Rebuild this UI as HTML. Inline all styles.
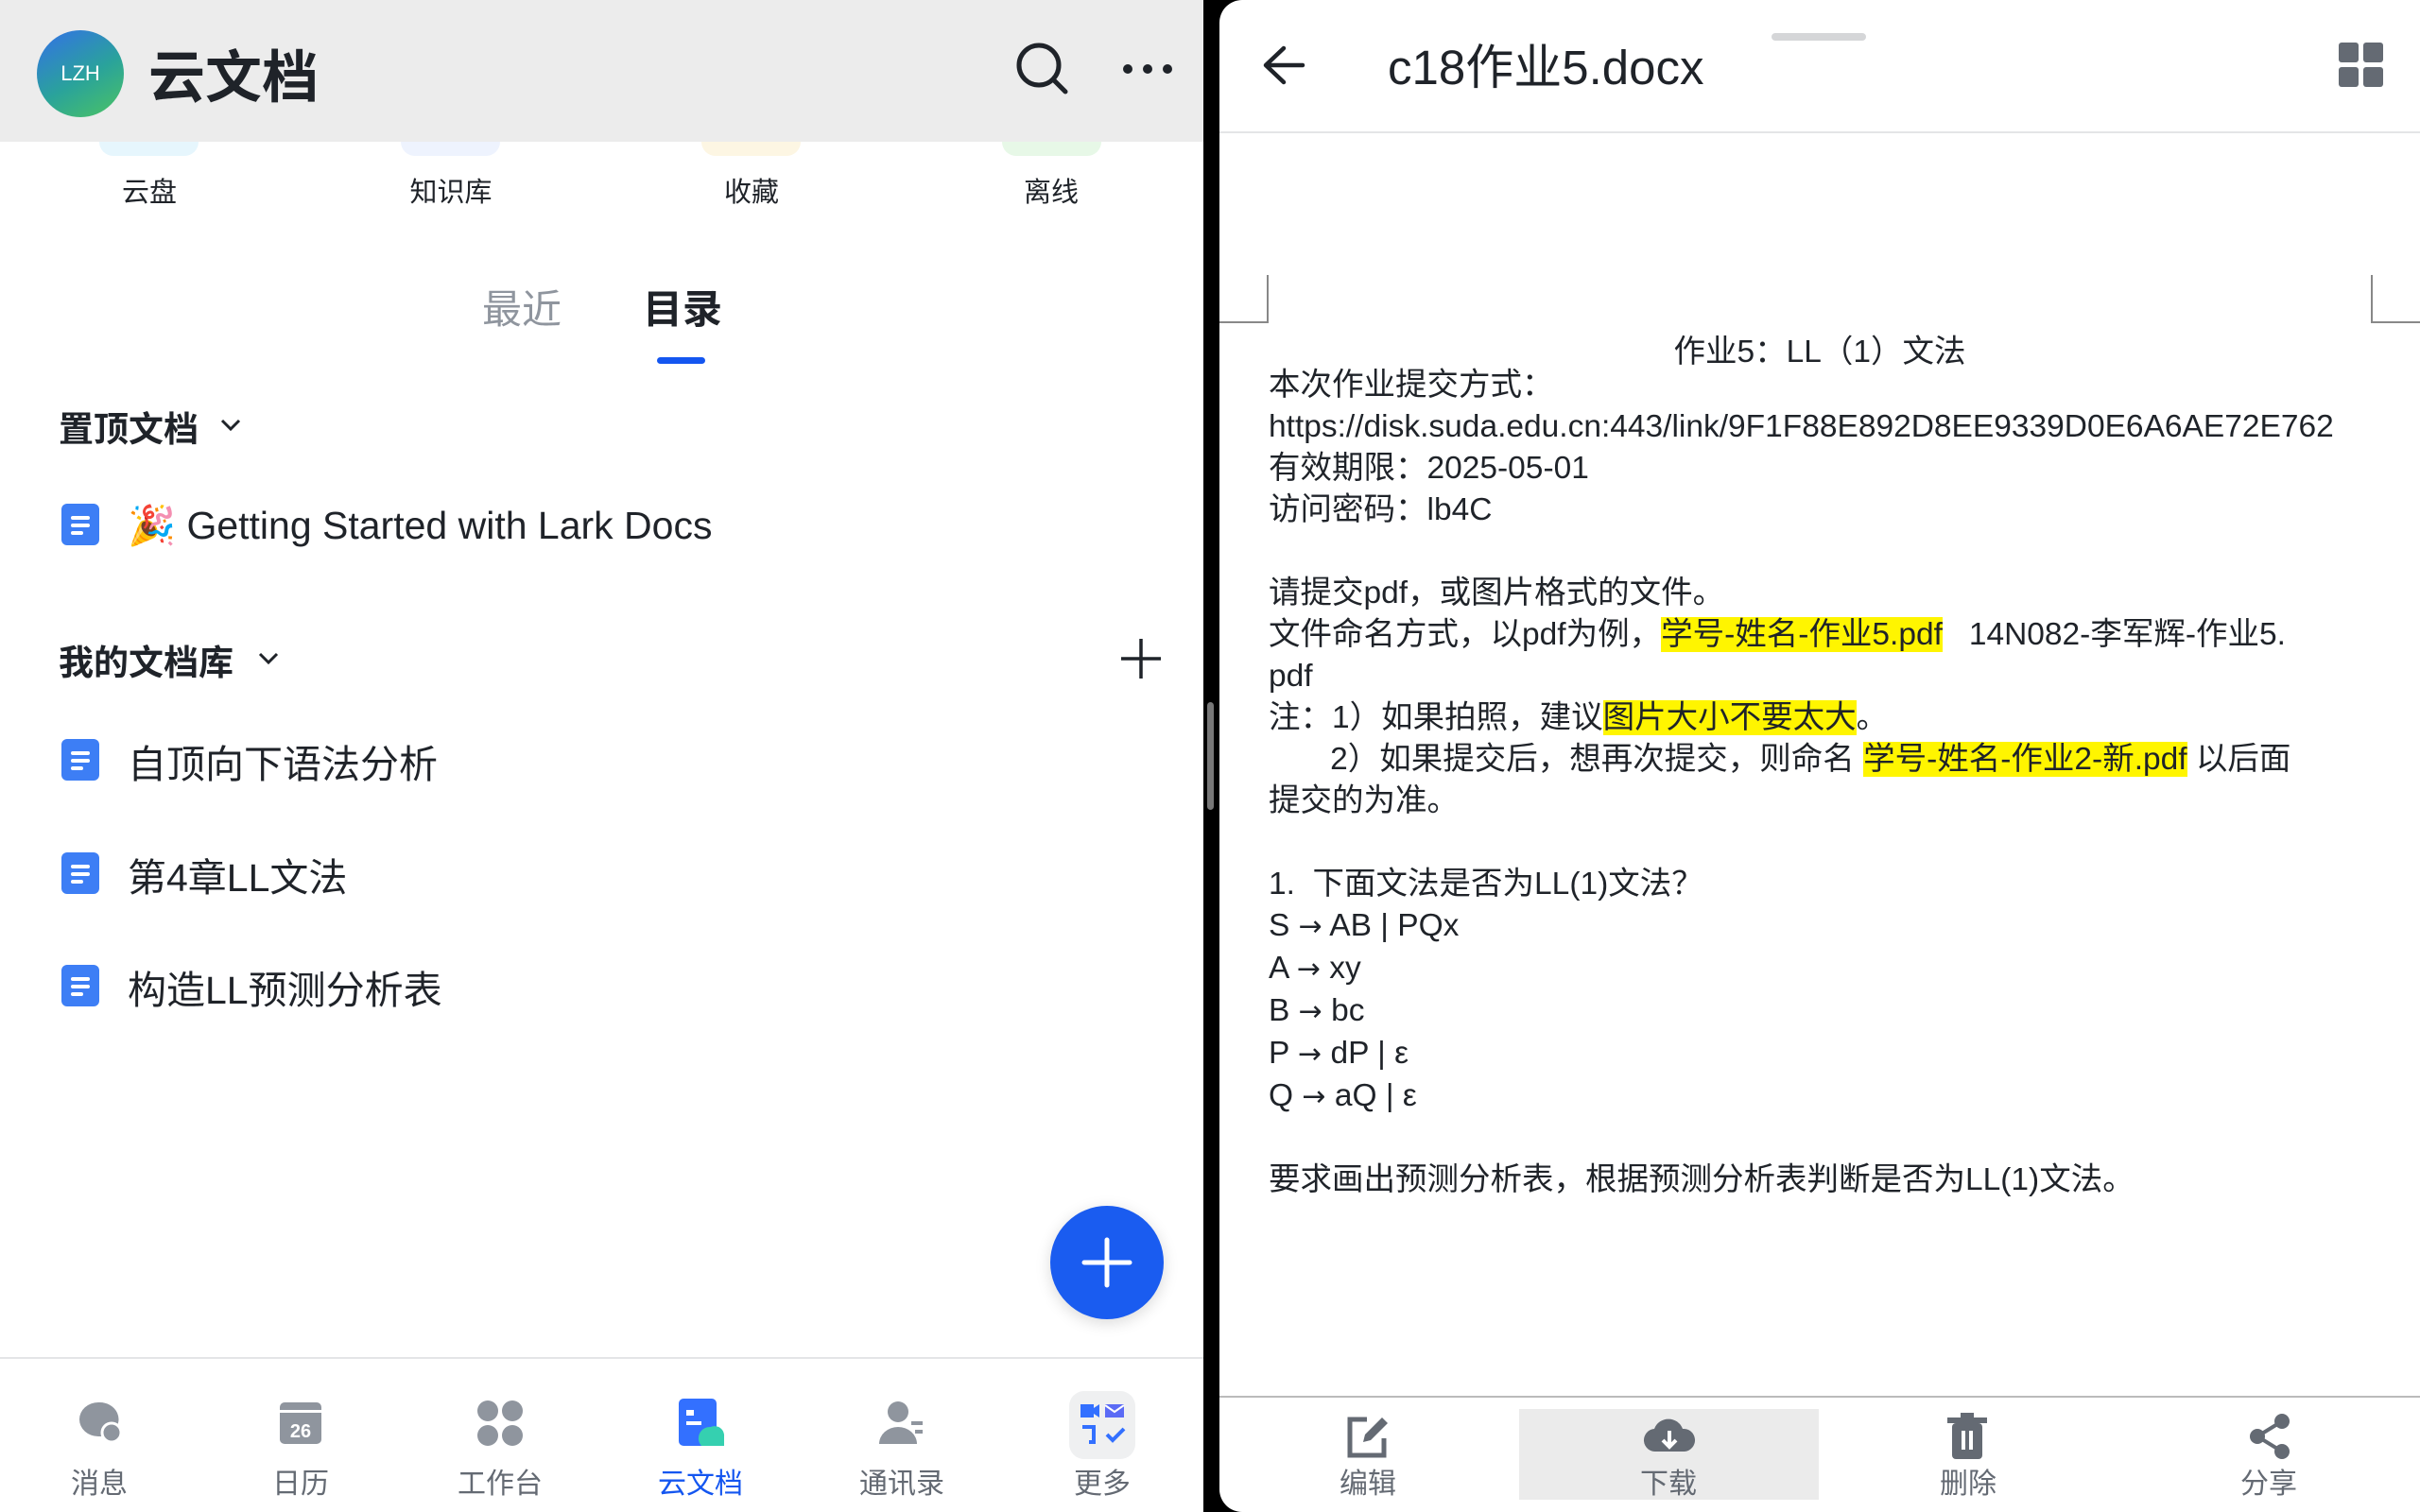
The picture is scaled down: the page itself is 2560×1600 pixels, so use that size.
<!DOCTYPE html>
<html><head><meta charset="utf-8"><style>
*{margin:0;padding:0;box-sizing:border-box}
body{width:2560px;height:1600px;background:#000;position:relative;overflow:hidden;font-family:"Liberation Sans","Noto Sans CJK SC",sans-serif;color:#1f2329}
.a{position:absolute;white-space:nowrap}
#L{position:absolute;left:0;top:0;width:1273px;height:1600px;background:#fff;overflow:hidden}
#R{position:absolute;left:1290px;top:0;width:1270px;height:1600px;background:#fff;border-radius:24px 0 0 24px;overflow:hidden}
.doc{position:absolute;left:65px;width:40px;height:44px;background:#3d7ef5;border-radius:6px}
.doc i{position:absolute;left:10px;height:4px;background:#fff;border-radius:2px}
.it{font-size:41px;color:#1f2329}
.nav{font-size:30px;color:#646a73;transform:translateX(-50%)}
.hl{background:#fff500}
.ar{font-family:"DejaVu Sans",sans-serif;font-size:30px}
#txt{position:absolute;left:52px;top:386px;font-size:33.5px;line-height:44px;color:#1f2329;white-space:pre}
</style></head><body>
<div id="L">
 <div class="a" style="left:0;top:0;width:1273px;height:150px;background:#ececec"></div>
 <div class="a" style="left:39px;top:32px;width:92px;height:92px;border-radius:50%;background:linear-gradient(150deg,#3370e8,#2aa39a 55%,#4cc462);color:#fff;font-size:22px;text-align:center;line-height:92px">LZH</div>
 <div class="a" style="left:157px;top:48px;font-size:60px;font-weight:bold;line-height:70px">云文档</div>
 <svg class="a" style="left:1072px;top:42px" width="62" height="62" viewBox="0 0 62 62"><circle cx="27" cy="27" r="21" fill="none" stroke="#1f2329" stroke-width="5"/><path d="M42 42l13 13" stroke="#1f2329" stroke-width="5" stroke-linecap="round"/></svg>
 <svg class="a" style="left:1186px;top:66px" width="56" height="14"><circle cx="7" cy="7" r="5" fill="#1f2329"/><circle cx="28" cy="7" r="5" fill="#1f2329"/><circle cx="49" cy="7" r="5" fill="#1f2329"/></svg>
 <div class="a" style="left:105px;top:150px;width:105px;height:15px;background:#e6f6fd;border-radius:0 0 40px 40px"></div>
 <div class="a" style="left:424px;top:150px;width:105px;height:15px;background:#eef3fe;border-radius:0 0 40px 40px"></div>
 <div class="a" style="left:742px;top:150px;width:105px;height:15px;background:#fdf6e3;border-radius:0 0 40px 40px"></div>
 <div class="a" style="left:1060px;top:150px;width:105px;height:15px;background:#e7f8e7;border-radius:0 0 40px 40px"></div>
 <div class="a" style="left:158px;top:180px;font-size:29px;transform:translateX(-50%)">云盘</div>
 <div class="a" style="left:477px;top:180px;font-size:29px;transform:translateX(-50%)">知识库</div>
 <div class="a" style="left:795px;top:180px;font-size:29px;transform:translateX(-50%)">收藏</div>
 <div class="a" style="left:1112px;top:180px;font-size:29px;transform:translateX(-50%)">离线</div>
 <div class="a" style="left:510px;top:294px;font-size:42px;color:#8f959e">最近</div>
 <div class="a" style="left:680px;top:294px;font-size:42px;font-weight:bold">目录</div>
 <div class="a" style="left:695px;top:378px;width:51px;height:7px;background:#1456f0;border-radius:4px"></div>
 <div class="a" style="left:62px;top:424px;font-size:37px;font-weight:bold">置顶文档</div>
 <svg class="a" style="left:232px;top:442px" width="24" height="16"><path d="M3 3l9 9 9-9" fill="none" stroke="#1f2329" stroke-width="3"/></svg>
 <div class="doc" style="top:533px"><i style="top:13px;width:20px"></i><i style="top:21px;width:20px"></i><i style="top:29px;width:13px"></i></div>
 <div class="a it" style="left:135px;top:533px">🎉 Getting Started with Lark Docs</div>
 <div class="a" style="left:62px;top:671px;font-size:37px;font-weight:bold">我的文档库</div>
 <svg class="a" style="left:272px;top:689px" width="24" height="16"><path d="M3 3l9 9 9-9" fill="none" stroke="#1f2329" stroke-width="3"/></svg>
 <svg class="a" style="left:1184px;top:674px" width="46" height="46"><path d="M23 2v42M2 23h42" stroke="#1f2329" stroke-width="3.5"/></svg>
 <div class="doc" style="top:782px"><i style="top:13px;width:20px"></i><i style="top:21px;width:20px"></i><i style="top:29px;width:13px"></i></div>
 <div class="a it" style="left:135px;top:775px">自顶向下语法分析</div>
 <div class="doc" style="top:902px"><i style="top:13px;width:20px"></i><i style="top:21px;width:20px"></i><i style="top:29px;width:13px"></i></div>
 <div class="a it" style="left:135px;top:895px">第4章LL文法</div>
 <div class="doc" style="top:1021px"><i style="top:13px;width:20px"></i><i style="top:21px;width:20px"></i><i style="top:29px;width:13px"></i></div>
 <div class="a it" style="left:135px;top:1014px">构造LL预测分析表</div>
 <div class="a" style="left:1111px;top:1276px;width:120px;height:120px;border-radius:50%;background:#1a5cf0;box-shadow:0 4px 16px rgba(0,0,0,.15)"></div>
 <svg class="a" style="left:1143px;top:1308px" width="56" height="56"><path d="M28 4v48M4 28h48" stroke="#fff" stroke-width="5" stroke-linecap="round"/></svg>
 <div class="a" style="left:0;top:1436px;width:1273px;height:2px;background:#e4e5e7"></div>
 <svg class="a" style="left:78px;top:1480px" width="54" height="52"><path d="M26 4a20 18 0 1 0 0 36h8l6 6v-10a20 18 0 0 0-14-32z" fill="#8f959e"/><circle cx="40" cy="36" r="10" fill="#8f959e" stroke="#fff" stroke-width="3"/></svg>
 <svg class="a" style="left:294px;top:1480px" width="48" height="50"><rect x="2" y="4" width="44" height="44" rx="5" fill="#8f959e"/><rect x="2" y="12" width="44" height="3" fill="#fff"/><text x="24" y="41" font-size="20" font-weight="bold" fill="#fff" text-anchor="middle" font-family="Liberation Sans">26</text></svg>
 <svg class="a" style="left:503px;top:1480px" width="52" height="52"><circle cx="13" cy="13" r="11" fill="#8f959e"/><circle cx="39" cy="13" r="11" fill="#8f959e"/><circle cx="13" cy="39" r="11" fill="#8f959e"/><circle cx="39" cy="39" r="11" fill="#8f959e"/></svg>
 <svg class="a" style="left:716px;top:1480px" width="52" height="52"><rect x="2" y="0" width="40" height="50" rx="5" fill="#3370ff"/><rect x="10" y="12" width="8" height="6" fill="#fff"/><rect x="10" y="24" width="16" height="4" fill="#fff"/><path d="M26 50a12 12 0 0 1 10-20 10 10 0 0 1 14 10v10z" fill="#35d0b0"/></svg>
 <svg class="a" style="left:928px;top:1480px" width="52" height="52"><circle cx="22" cy="14" r="11" fill="#8f959e"/><path d="M2 48a20 18 0 0 1 40 0z" fill="#8f959e"/><rect x="36" y="24" width="12" height="4" fill="#8f959e"/><rect x="40" y="33" width="8" height="4" fill="#8f959e"/></svg>
 <div class="a" style="left:1131px;top:1472px;width:70px;height:72px;background:#eff0f1;border-radius:16px"></div>
 <svg class="a" style="left:1141px;top:1482px" width="52" height="52"><rect x="2" y="4" width="14" height="14" fill="#3370ff"/><path d="M16 8l6-4v14l-6-4z" fill="#3370ff"/><rect x="28" y="4" width="20" height="14" fill="#5b6bf5"/><path d="M28 5l10 7 10-7" stroke="#fff" stroke-width="2" fill="none"/><path d="M4 28h12v16h-5" stroke="#3370ff" stroke-width="4" fill="none"/><path d="M30 36l6 6 12-12" stroke="#3370ff" stroke-width="4" fill="none"/></svg>
 <div class="a nav" style="left:105px;top:1545px">消息</div>
 <div class="a nav" style="left:318px;top:1545px">日历</div>
 <div class="a nav" style="left:529px;top:1545px">工作台</div>
 <div class="a nav" style="left:741px;top:1545px;color:#1456f0">云文档</div>
 <div class="a nav" style="left:954px;top:1545px">通讯录</div>
 <div class="a nav" style="left:1166px;top:1545px">更多</div>
</div>
<div class="a" style="left:1277px;top:743px;width:7px;height:114px;background:#777;border-radius:4px"></div>
<div id="R">
 <div class="a" style="left:584px;top:35px;width:100px;height:8px;background:#d5d6d8;border-radius:4px"></div>
 <svg class="a" style="left:44px;top:46px" width="48" height="46"><path d="M44 23H6M24 5L5 23l19 18" fill="none" stroke="#1f2329" stroke-width="4.5" stroke-linecap="round" stroke-linejoin="round"/></svg>
 <div class="a" style="left:178px;top:42px;font-size:51px;line-height:60px">c18作业5.docx</div>
 <svg class="a" style="left:1184px;top:45px" width="48" height="48"><rect x="0" y="0" width="21" height="21" rx="3" fill="#646a73"/><rect x="26" y="0" width="21" height="21" rx="3" fill="#646a73"/><rect x="0" y="26" width="21" height="21" rx="3" fill="#646a73"/><rect x="26" y="26" width="21" height="21" rx="3" fill="#646a73"/></svg>
 <div class="a" style="left:0;top:139px;width:1270px;height:2px;background:#e4e5e7"></div>
 <div class="a" style="left:0;top:291px;width:52px;height:51px;border-right:2px solid #888;border-bottom:2px solid #888"></div>
 <div class="a" style="left:1218px;top:291px;width:52px;height:51px;border-left:2px solid #888;border-bottom:2px solid #888"></div>
 <div class="a" style="left:0;top:344px;width:1270px;text-align:center;font-size:33.5px;padding-left:0">作业5：LL（1）文法</div>
 <div id="txt">本次作业提交方式：
https://disk.suda.edu.cn:443/link/9F1F88E892D8EE9339D0E6A6AE72E762
有效期限：2025-05-01
访问密码：lb4C

请提交pdf，或图片格式的文件。
文件命名方式，以pdf为例，<span class="hl">学号-姓名-作业5.pdf</span>   14N082-李军辉-作业5.
pdf
注：1）如果拍照，建议<span class="hl">图片大小不要太大</span>。
       2）如果提交后，想再次提交，则命名 <span class="hl">学号-姓名-作业2-新.pdf</span> 以后面
提交的为准。

1.  下面文法是否为LL(1)文法？
S <span class="ar">→</span> AB | PQx
A <span class="ar">→</span> xy
B <span class="ar">→</span> bc
P <span class="ar">→</span> dP | ε
Q <span class="ar">→</span> aQ | ε

要求画出预测分析表，根据预测分析表判断是否为LL(1)文法。</div>
 <div class="a" style="left:0;top:1477px;width:1270px;height:2px;background:#bbb"></div>
 <div class="a" style="left:317px;top:1491px;width:317px;height:96px;background:#ebebeb"></div>
 <svg class="a" style="left:132px;top:1496px" width="50" height="50"><path d="M24 6H6v38h36V26" fill="none" stroke="#646a73" stroke-width="5"/><path d="M20 30l2-8 18-18 6 6-18 18z" fill="#646a73"/></svg>
 <svg class="a" style="left:448px;top:1496px" width="56" height="50"><path d="M14 40a12 12 0 0 1-2-24 16 16 0 0 1 30 0 12 12 0 0 1 2 24z" fill="#646a73"/><path d="M28 18v16M21 28l7 7 7-7" stroke="#fff" stroke-width="4" fill="none"/></svg>
 <svg class="a" style="left:766px;top:1494px" width="50" height="52"><rect x="4" y="6" width="42" height="6" fill="#646a73"/><rect x="18" y="1" width="14" height="6" fill="#646a73"/><rect x="9" y="12" width="32" height="38" rx="4" fill="#646a73"/><rect x="19" y="20" width="4" height="20" fill="#fff"/><rect x="27" y="20" width="4" height="20" fill="#fff"/></svg>
 <svg class="a" style="left:1086px;top:1494px" width="50" height="52"><circle cx="38" cy="10" r="8" fill="#646a73"/><circle cx="12" cy="26" r="8" fill="#646a73"/><circle cx="38" cy="42" r="8" fill="#646a73"/><path d="M38 10L12 26l26 16" stroke="#646a73" stroke-width="4" fill="none"/></svg>
 <div class="a nav" style="left:157px;top:1545px">编辑</div>
 <div class="a nav" style="left:475px;top:1545px">下载</div>
 <div class="a nav" style="left:792px;top:1545px">删除</div>
 <div class="a nav" style="left:1110px;top:1545px">分享</div>
</div>
</body></html>
